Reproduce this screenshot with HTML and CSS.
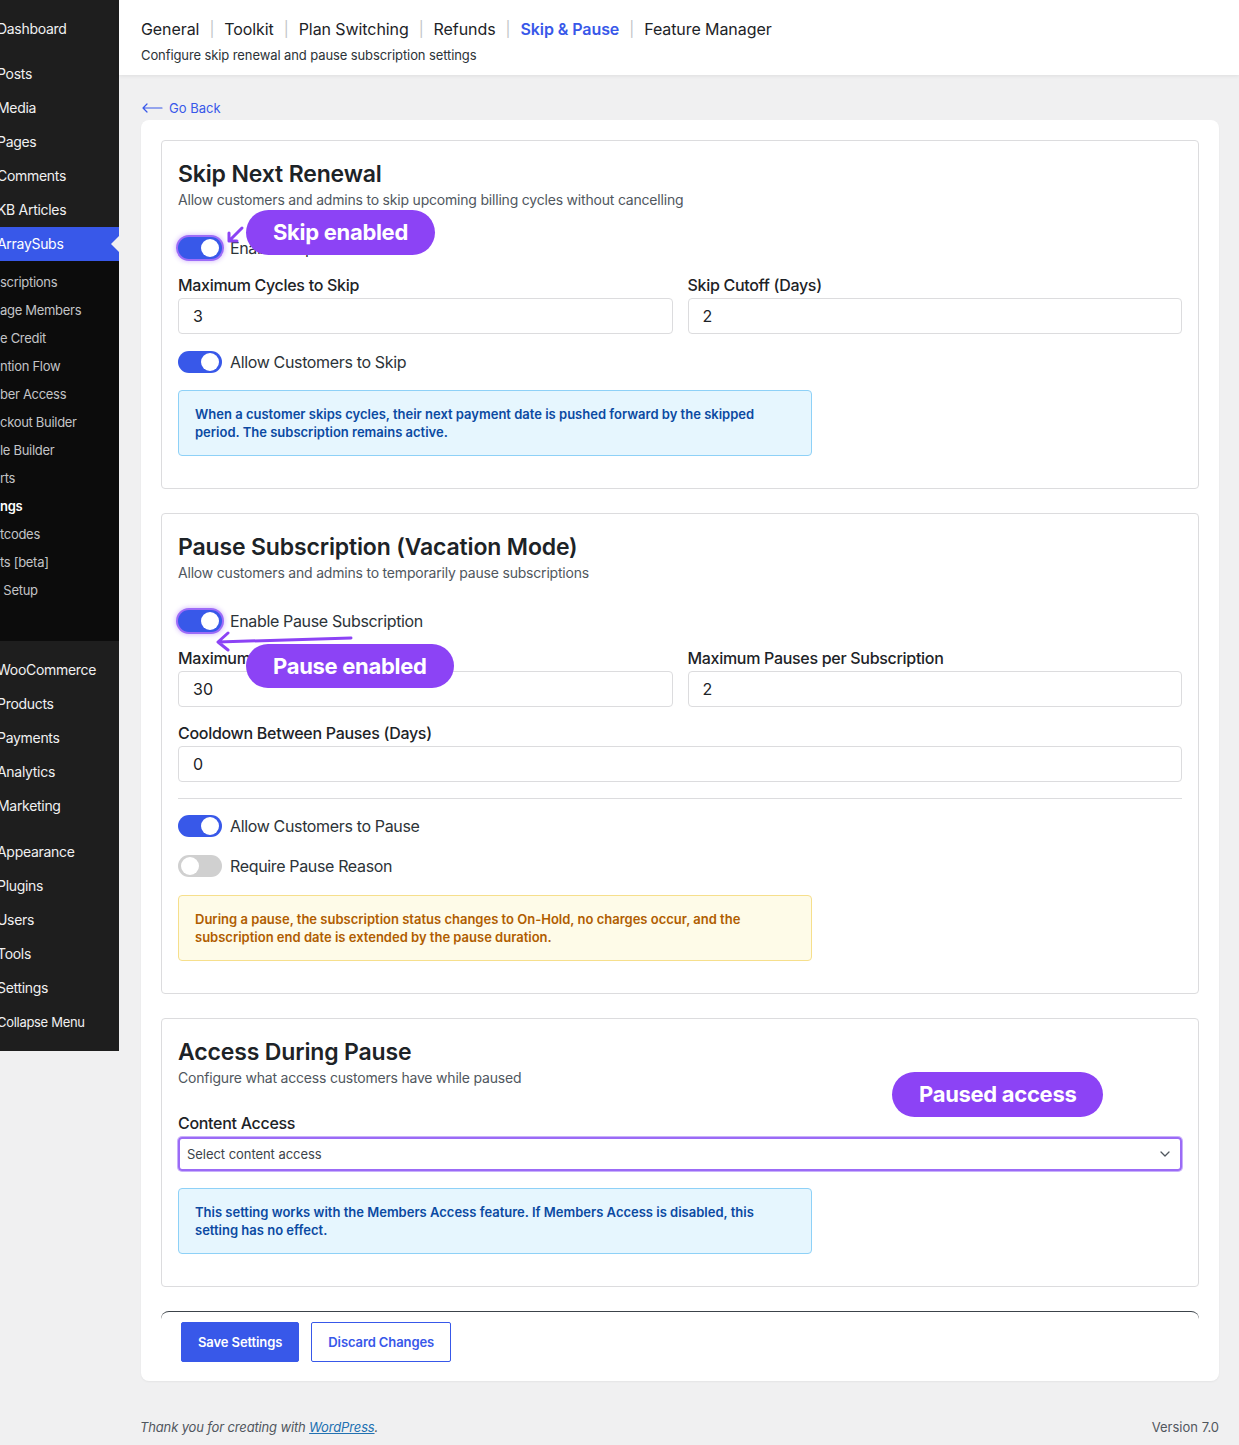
FILE: index.html
```html
<!DOCTYPE html>
<html lang="en">
<head>
	<meta charset="UTF-8">
	<meta name="viewport" content="width=device-width, initial-scale=1.0">
	<title>ArraySubs - Skip &amp; Pause</title>
	<link rel="stylesheet" href="styles.css">
</head>
<body>
	<div class="wrap">
		<!-- admin menu -->
		<nav class="adminmenu">
			<ul class="menu">
				<li class="menu-item">Dashboard</li>
				<li class="menu-sep"></li>
				<li class="menu-item">Posts</li>
				<li class="menu-item">Media</li>
				<li class="menu-item">Pages</li>
				<li class="menu-item">Comments</li>
				<li class="menu-item">KB Articles</li>
				<li class="menu-item current">ArraySubs</li>
				<li class="submenu">
					<ul>
						<li>scriptions</li>
						<li>age Members</li>
						<li>e Credit</li>
						<li>ntion Flow</li>
						<li>ber Access</li>
						<li>ckout Builder</li>
						<li>le Builder</li>
						<li>rts</li>
						<li class="active">ngs</li>
						<li>tcodes</li>
						<li>ts [beta]</li>
						<li>&nbsp;Setup</li>
					</ul>
				</li>
				<li class="menu-sep sep-lg"></li>
				<li class="menu-item">WooCommerce</li>
				<li class="menu-item">Products</li>
				<li class="menu-item">Payments</li>
				<li class="menu-item">Analytics</li>
				<li class="menu-item">Marketing</li>
				<li class="menu-sep sep-lg"></li>
				<li class="menu-item">Appearance</li>
				<li class="menu-item">Plugins</li>
				<li class="menu-item">Users</li>
				<li class="menu-item">Tools</li>
				<li class="menu-item">Settings</li>
				<li class="menu-item collapse">Collapse Menu</li>
			</ul>
		</nav>

		<div class="content">
			<header class="topbar">
				<nav class="tabs">
					<a href="#">General</a><span class="tab-sep">|</span>
					<a href="#">Toolkit</a><span class="tab-sep">|</span>
					<a href="#">Plan Switching</a><span class="tab-sep">|</span>
					<a href="#">Refunds</a><span class="tab-sep">|</span>
					<a href="#" class="active">Skip &amp; Pause</a><span class="tab-sep">|</span>
					<a href="#">Feature Manager</a>
				</nav>
				<p class="topbar-desc">Configure skip renewal and pause subscription settings</p>
			</header>

			<div class="page">
				<a href="#" class="go-back">
					<svg width="22" height="10" viewBox="0 0 22 10"><path d="M21 5H2M6 1L2 5l4 4" fill="none" stroke="#3858e9" stroke-width="1.2" stroke-linecap="round" stroke-linejoin="round"/></svg>
					Go Back
				</a>

				<div class="card">
					<!-- skip -->
					<section class="panel">
						<h2 class="panel-title">Skip Next Renewal</h2>
						<p class="panel-desc">Allow customers and admins to skip upcoming billing cycles without cancelling</p>

						<label class="toggle-row row-first">
							<span class="toggle on ringed"></span>
							<span>Enable Skip Renewal</span>
						</label>

						<div class="grid-2 field">
							<div>
								<div class="field-label">Maximum Cycles to Skip</div>
								<input class="input" type="text" value="3">
							</div>
							<div>
								<div class="field-label">Skip Cutoff (Days)</div>
								<input class="input" type="text" value="2">
							</div>
						</div>

						<label class="toggle-row row-next">
							<span class="toggle on"></span>
							<span>Allow Customers to Skip</span>
						</label>

						<div class="notice notice-info">When a customer skips cycles, their next payment date is pushed forward by the skipped period. The subscription remains active.</div>

						<svg class="arrow arrow-skip" width="22" height="22" viewBox="0 0 22 22"><path d="M18 3L5 16M5 16V8M5 16h8" fill="none" stroke="#8c43f5" stroke-width="3" stroke-linecap="round" stroke-linejoin="round"/></svg>
						<span class="badge badge-skip">Skip enabled</span>
					</section>

					<!-- pause -->
					<section class="panel">
						<h2 class="panel-title">Pause Subscription (Vacation Mode)</h2>
						<p class="panel-desc">Allow customers and admins to temporarily pause subscriptions</p>

						<label class="toggle-row row-first">
							<span class="toggle on ringed"></span>
							<span>Enable Pause Subscription</span>
						</label>

						<div class="grid-2 field">
							<div>
								<div class="field-label">Maximum Pause Duration (Days)</div>
								<input class="input" type="text" value="30">
							</div>
							<div>
								<div class="field-label">Maximum Pauses per Subscription</div>
								<input class="input" type="text" value="2">
							</div>
						</div>

						<div class="field field-wide">
							<div class="field-label">Cooldown Between Pauses (Days)</div>
							<input class="input" type="text" value="0">
						</div>

						<hr class="divider">

						<label class="toggle-row row-after-divider">
							<span class="toggle on"></span>
							<span>Allow Customers to Pause</span>
						</label>
						<label class="toggle-row row-next">
							<span class="toggle"></span>
							<span>Require Pause Reason</span>
						</label>

						<div class="notice notice-warning">During a pause, the subscription status changes to On-Hold, no charges occur, and the subscription end date is extended by the pause duration.</div>

						<svg class="arrow arrow-pause" width="142" height="24" viewBox="0 0 142 24"><path d="M137 8L4 12M14 3L4 12l10 8" fill="none" stroke="#8c43f5" stroke-width="3" stroke-linecap="round" stroke-linejoin="round"/></svg>
						<span class="badge badge-pause">Pause enabled</span>
					</section>

					<!-- access -->
					<section class="panel">
						<h2 class="panel-title">Access During Pause</h2>
						<p class="panel-desc">Configure what access customers have while paused</p>

						<div class="field field-select">
							<div class="field-label">Content Access</div>
							<div class="select">
								<span>Select content access</span>
								<svg width="10" height="6" viewBox="0 0 10 6"><path d="M1 1l4 4 4-4" fill="none" stroke="#50575e" stroke-width="1.3" stroke-linecap="round" stroke-linejoin="round"/></svg>
							</div>
						</div>

						<div class="notice notice-info">This setting works with the Members Access feature. If Members Access is disabled, this setting has no effect.</div>

						<span class="badge badge-access">Paused access</span>
					</section>

					<div class="actions">
						<button class="btn btn-primary">Save Settings</button>
						<button class="btn btn-outline">Discard Changes</button>
					</div>
				</div>

				<footer class="footer">
					<p class="footer-thanks">Thank you for creating with <a href="#">WordPress</a>.</p>
					<p class="footer-version">Version 7.0</p>
				</footer>
			</div>
		</div>
	</div>
</body>
</html>
```

FILE: styles.css
```css
*,
*::before,
*::after {
	box-sizing: border-box;
	margin: 0;
	padding: 0;
}

body {
	font-family: Inter, "Noto Sans", Arial, sans-serif;
	background-color: #f0f0f1;
	color: #1d2327;
	font-size: 13px;
	line-height: 1.4;
}

ul {
	list-style: none;
}

a {
	text-decoration: none;
	color: inherit;
}

.wrap {
	display: flex;
	align-items: flex-start;
	min-height: 1445px;
}

/* ---------- admin menu ---------- */

.adminmenu {
	width: 119px;
	flex-shrink: 0;
	background-color: #1e1e1e;
	padding-top: 12px;
	padding-bottom: 12px;
	overflow: hidden;
	letter-spacing: -0.3px;
}

.menu-item {
	position: relative;
	height: 34px;
	line-height: 34px;
	font-size: 14px;
	color: #f0f0f1;
	white-space: nowrap;
	text-indent: -3px;
}

.menu-item.current {
	background-color: #3858e9;
	color: #fff;
}

.menu-item.current::after {
	content: "";
	position: absolute;
	right: 0;
	top: 9px;
	border: 8px solid transparent;
	border-right-color: #f0f0f1;
}

.menu-item.collapse {
	font-size: 13px;
}

.menu-sep {
	height: 11px;
}

.menu-sep.sep-lg {
	height: 12px;
}

.submenu {
	background-color: #0c0c0c;
	padding-top: 7px;
	padding-bottom: 37px;
}

.submenu li {
	height: 28px;
	line-height: 28px;
	font-size: 13px;
	color: #c3c4c7;
	white-space: nowrap;
}

.submenu li.active {
	color: #fff;
	font-weight: 600;
}

/* ---------- content ---------- */

.content {
	flex: 1;
	min-width: 0;
}

.topbar {
	background-color: #fff;
	height: 75px;
	padding: 18px 22px 0;
	box-shadow: 0 1px 4px rgba(0, 0, 0, 0.08);
}

.tabs {
	display: flex;
	align-items: center;
	font-size: 16px;
	line-height: 22px;
	letter-spacing: -0.08px;
}

.tabs a {
	color: #1d2327;
}

.tabs a.active {
	color: #3858e9;
	font-weight: 600;
}

.tab-sep {
	color: #c3c4c7;
	margin: 0 10px;
	font-size: 15px;
}

.topbar-desc {
	margin-top: 6px;
	font-size: 13px;
	line-height: 18px;
	color: #2c3338;
	letter-spacing: -0.1px;
}

.page {
	padding: 0 20px 0 22px;
}

.go-back {
	display: inline-flex;
	align-items: center;
	gap: 6px;
	margin-top: 25px;
	height: 16px;
	font-size: 13px;
	color: #3858e9;
}

.card {
	margin-top: 3px;
	background-color: #fff;
	border-radius: 8px;
	padding: 20px 20px 19px;
	box-shadow: 0 1px 2px rgba(0, 0, 0, 0.05);
}

/* ---------- panels ---------- */

.panel {
	position: relative;
	border: 1px solid #dcdcde;
	border-radius: 4px;
	padding: 17px 16px 32px;
	margin-bottom: 24px;
}

.panel-title {
	font-size: 23px;
	line-height: 32px;
	font-weight: 600;
	color: #1d2327;
	letter-spacing: -0.15px;
}

.panel-desc {
	font-size: 14px;
	line-height: 20px;
	color: #50575e;
	letter-spacing: -0.2px;
}

.toggle-row {
	display: flex;
	align-items: center;
	gap: 8px;
	height: 24px;
	font-size: 16px;
	color: #2c3338;
	letter-spacing: -0.35px;
}

.row-first {
	margin-top: 26px;
}

.row-next {
	margin-top: 16px;
}

.row-after-divider {
	margin-top: 15px;
}

.toggle {
	position: relative;
	width: 44px;
	height: 22px;
	border-radius: 11px;
	background-color: #d0d0d0;
	flex-shrink: 0;
}

.toggle::after {
	content: "";
	position: absolute;
	top: 2px;
	left: 3px;
	width: 18px;
	height: 18px;
	border-radius: 50%;
	background-color: #fff;
}

.toggle.on {
	background-color: #3858e9;
}

.toggle.on::after {
	left: auto;
	right: 3px;
}

.toggle.ringed {
	box-shadow: 0 0 0 2px #9d6cf8, 0 0 4px 3px rgba(140, 67, 245, 0.3);
}

.field {
	margin-top: 14px;
}

.field-wide {
	margin-top: 15px;
}

.field-label {
	font-size: 16px;
	line-height: 22px;
	font-weight: 500;
	color: #1d2327;
	margin-bottom: 2px;
	letter-spacing: -0.3px;
}

.grid-2 {
	display: grid;
	grid-template-columns: 1fr 1fr;
	gap: 15px;
}

.input {
	display: block;
	width: 100%;
	height: 36px;
	border: 1px solid #dcdcde;
	border-radius: 4px;
	padding: 0 14px;
	font-family: inherit;
	font-size: 16px;
	color: #1d2327;
	background-color: #fff;
}

.divider {
	border: none;
	border-top: 1px solid #dcdcde;
	margin-top: 16px;
}

.field-select {
	margin-top: 24px;
}

.field-select .field-label {
	margin-bottom: 3px;
}

.select {
	display: flex;
	align-items: center;
	justify-content: space-between;
	height: 34px;
	padding: 0 10px 0 7px;
	border: 2px solid #9b6bf6;
	border-radius: 4px;
	box-shadow: 0 0 0 1px #c9b0fb;
	font-size: 13px;
	color: #3c434a;
	letter-spacing: -0.05px;
}

.notice {
	width: 634px;
	margin-top: 16px;
	padding: 14px 16px;
	border: 1px solid;
	border-radius: 4px;
	font-size: 13px;
	line-height: 18px;
	font-weight: 600;
}

.notice-info {
	background-color: #e6f6fe;
	border-color: #8ed1f7;
	color: #0b4aa2;
}

.notice-warning {
	margin-top: 17px;
	background-color: #fefbe8;
	border-color: #f6df8c;
	color: #b05d00;
}

.field-select + .notice {
	margin-top: 17px;
}

/* ---------- annotations ---------- */

.badge {
	position: absolute;
	height: 45px;
	line-height: 45px;
	padding: 0 27px;
	border-radius: 23px;
	background-color: #8c43f5;
	color: #fff;
	font-size: 22px;
	font-weight: 700;
	letter-spacing: -0.3px;
	white-space: nowrap;
}

.badge-skip {
	left: 84px;
	top: 69px;
}

.badge-pause {
	left: 84px;
	top: 130px;
	height: 44px;
	line-height: 44px;
}

.badge-access {
	left: 730px;
	top: 53px;
}

.arrow {
	position: absolute;
}

.arrow-skip {
	left: 62px;
	top: 84px;
}

.arrow-pause {
	left: 52px;
	top: 116px;
}

/* ---------- actions ---------- */

.actions {
	display: flex;
	gap: 12px;
	border-top: 1px solid #3c434a;
	border-radius: 8px 8px 0 0;
	padding: 10px 20px 0;
}

.btn {
	height: 40px;
	padding: 0 16px;
	font-family: inherit;
	font-size: 13px;
	font-weight: 600;
	letter-spacing: -0.1px;
	border-radius: 2px;
	cursor: pointer;
}

.btn-primary {
	background-color: #3858e9;
	color: #fff;
	border: 1px solid #3858e9;
}

.btn-outline {
	background-color: #fff;
	color: #3858e9;
	border: 1px solid #3858e9;
}

/* ---------- footer ---------- */

.footer {
	display: flex;
	justify-content: space-between;
	margin-top: 37px;
	font-size: 13px;
	line-height: 18px;
	color: #50575e;
}

.footer-thanks {
	font-style: italic;
	margin-left: -1px;
	letter-spacing: -0.15px;
}

.footer-thanks a {
	color: #2271b1;
	text-decoration: underline;
}
```
